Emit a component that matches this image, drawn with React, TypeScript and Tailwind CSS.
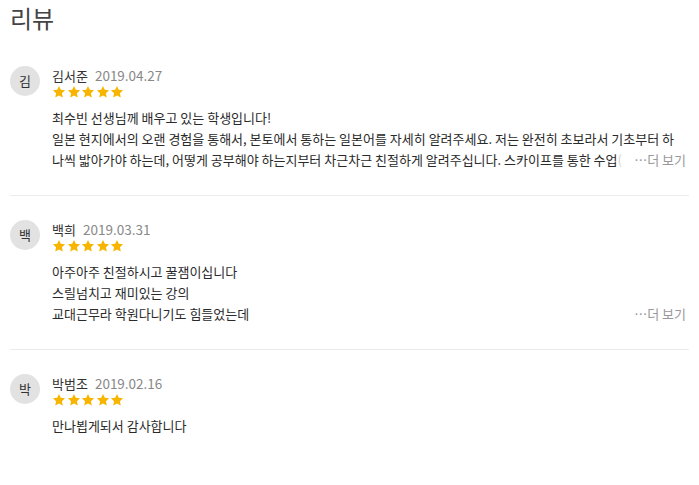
import React from 'react'

type Review = {
  initial: string
  name: string
  date: string
  lines: string[]
  fade?: string
  more?: boolean
}

const reviews: Review[] = [
  {
    initial: '김',
    name: '김서준',
    date: '2019.04.27',
    lines: [
      '최수빈 선생님께 배우고 있는 학생입니다!',
      '일본 현지에서의 오랜 경험을 통해서, 본토에서 통하는 일본어를 자세히 알려주세요. 저는 완전히 초보라서 기초부터 하',
      '나씩 밟아가야 하는데, 어떻게 공부해야 하는지부터 차근차근 친절하게 알려주십니다. 스카이프를 통한 수업',
    ],
    fade: '(',
    more: true,
  },
  {
    initial: '백',
    name: '백희',
    date: '2019.03.31',
    lines: ['아주아주 친절하시고 꿀잼이십니다', '스릴넘치고 재미있는 강의', '교대근무라 학원다니기도 힘들었는데'],
    more: true,
  },
  {
    initial: '박',
    name: '박범조',
    date: '2019.02.16',
    lines: ['만나뵙게되서 감사합니다'],
  },
]

function Star() {
  return (
    <svg viewBox="0 0 24 24" className="w-[14px] h-[14px]" aria-hidden>
      <path
        d="M12 1.6l3.1 6.7 7.3.9-5.4 5 1.5 7.2L12 17.8l-6.5 3.6 1.5-7.2-5.4-5 7.3-.9z"
        fill="#f7b500"
      />
    </svg>
  )
}

function ReviewItem({ review }: { review: Review }) {
  const last = review.lines.length - 1
  return (
    <div className="flex gap-[12px] pt-[24px] pb-[25px] border-b border-[#ececec] last:border-b-0">
      <div className="w-[30px] h-[30px] shrink-0 rounded-full bg-[#e2e2e2] flex items-center justify-center text-[13px] text-[#333]">
        {review.initial}
      </div>
      <div className="flex-1 min-w-0">
        <div className="flex items-baseline gap-[7px] leading-[18px]">
          <span className="text-[13px] text-[#333]">{review.name}</span>
          <span className="text-[13.5px] text-[#888]">{review.date}</span>
        </div>
        <div className="flex gap-[0.5px] h-[14px]">
          {[0, 1, 2, 3, 4].map((i) => (
            <Star key={i} />
          ))}
        </div>
        <div className="mt-[8px] text-[13px] leading-[21px] text-[#2a2a2a] pr-[3px]">
          {review.lines.map((line, i) => (
            <div key={i} className="flex whitespace-nowrap">
              <span>{line}</span>
              {i === last && review.fade && <span className="text-[#d4d4d4]">{review.fade}</span>}
              {i === last && review.more && <span className="ml-auto pl-[2px] text-[#999]">…더 보기</span>}
            </div>
          ))}
        </div>
      </div>
    </div>
  )
}

export default function App() {
  return (
    <div
      className="w-[699px] h-[485px] bg-white px-[10px] overflow-hidden"
      style={{ fontFamily: '"Malgun Gothic", "Noto Sans CJK KR", sans-serif' }}
    >
      <h1 className="text-[24px] leading-[36px] text-[#444] font-normal">리뷰</h1>
      <div className="mt-[6px]">
        {reviews.map((r) => (
          <ReviewItem key={r.name} review={r} />
        ))}
      </div>
    </div>
  )
}
